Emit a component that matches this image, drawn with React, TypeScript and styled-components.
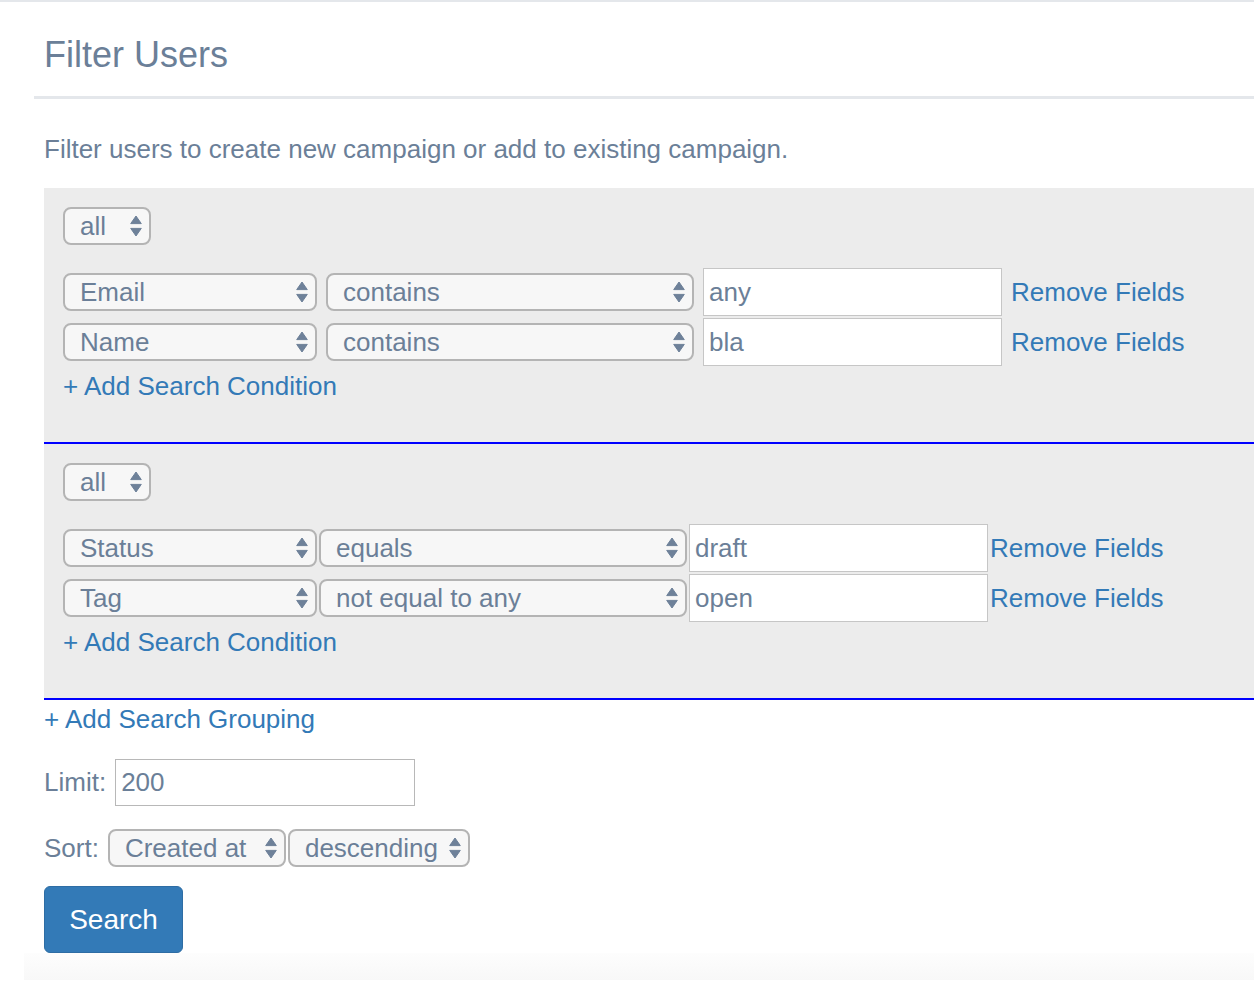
import React from "react";
import styled, { createGlobalStyle } from "styled-components";

const slate = "#6b7f98";
const link = "#337ab7";

const GlobalStyle = createGlobalStyle`
  html, body {
    margin: 0;
    padding: 0;
    background: #ffffff;
  }
  body {
    font-family: "Liberation Sans", Arial, Helvetica, sans-serif;
    color: ${slate};
  }
  * { box-sizing: border-box; }
`;

const Page = styled.div`
  border-top: 2px solid #e4e7eb;
  padding-left: 34px;
  min-height: 980px;
  display: flex;
  flex-direction: column;
`;

const Header = styled.header`
  border-bottom: 3px solid #e4e7eb;
  padding: 33px 0 21px 10px;
`;

const Title = styled.h1`
  margin: 0;
  font-size: 36px;
  line-height: 40px;
  font-weight: 400;
  color: ${slate};
`;

const Content = styled.main`
  padding-left: 10px;
  display: flex;
  flex-direction: column;
  align-items: flex-start;
`;

const Description = styled.p`
  margin: 35px 0 23px;
  font-size: 26px;
  line-height: 31px;
  color: ${slate};
`;

const Group = styled.section`
  align-self: stretch;
  background: #ececec;
  padding: 19px 19px 42px;
  border-bottom: 2px solid #0000ff;
  display: flex;
  flex-direction: column;
  align-items: flex-start;
`;

const GroupHead = styled.div`
  margin-bottom: 22px;
`;

const ConditionRow = styled.div<{ $gap: number }>`
  display: flex;
  align-items: center;
  height: 50px;
  gap: ${(p) => p.$gap}px;
`;

const SelectWrap = styled.div<{ $w: number }>`
  position: relative;
  display: inline-flex;
  width: ${(p) => p.$w}px;
  height: 38px;
  flex: none;
`;

const NativeSelect = styled.select`
  appearance: none;
  -webkit-appearance: none;
  width: 100%;
  height: 100%;
  margin: 0;
  border: 2px solid #b4b4b4;
  border-radius: 8px;
  background: #f7f7f7;
  color: ${slate};
  font-family: "Liberation Sans", Arial, Helvetica, sans-serif;
  font-size: 26px;
  padding: 0 30px 0 15px;
  outline: none;
`;

const Arrows = styled.svg`
  position: absolute;
  right: 9px;
  top: 50%;
  transform: translateY(-50%);
  width: 12px;
  height: 22px;
  pointer-events: none;
`;

const TextInput = styled.input<{ $h: number }>`
  width: 299px;
  height: ${(p) => p.$h}px;
  margin: 0;
  border: 1px solid #c6c6c6;
  background: #ffffff;
  color: ${slate};
  font-family: "Liberation Sans", Arial, Helvetica, sans-serif;
  font-size: 26px;
  padding: 0 5px;
  outline: none;
  flex: none;
`;

const LinkText = styled.a`
  color: ${link};
  font-size: 26px;
  line-height: 28px;
  text-decoration: none;
  cursor: pointer;
  white-space: nowrap;
`;

const AddCondition = styled(LinkText)`
  margin-top: 5px;
`;

const AddGrouping = styled(LinkText)`
  margin-top: 5px;
`;

const FieldRow = styled.div<{ $top: number }>`
  display: flex;
  align-items: center;
  margin-top: ${(p) => p.$top}px;
  gap: 2px;
`;

const Label = styled.label`
  font-size: 26px;
  color: ${slate};
  margin-right: 7px;
`;

const LimitInput = styled(TextInput)`
  width: 300px;
  border-color: #b8b8b8;
`;

const SearchButton = styled.button`
  margin-top: 19px;
  width: 139px;
  height: 67px;
  background: ${link};
  border: 1px solid #2e6da4;
  border-radius: 6px;
  color: #ffffff;
  font-family: "Liberation Sans", Arial, Helvetica, sans-serif;
  font-size: 28px;
  cursor: pointer;
`;

const Footer = styled.footer`
  flex: 1;
  margin-left: -10px;
  background: linear-gradient(to bottom, #fdfdfd, #f8f8f8);
`;

const Select: React.FC<{ w: number; value: string; options?: string[] }> = ({
  w,
  value,
  options,
}) => (
  <SelectWrap $w={w}>
    <NativeSelect defaultValue={value}>
      {(options ?? [value]).map((o) => (
        <option key={o} value={o}>
          {o}
        </option>
      ))}
    </NativeSelect>
    <Arrows viewBox="0 0 12 22">
      <path
        d="M6 1 L11.3 8.6 L0.7 8.6 Z M0.7 13.4 L11.3 13.4 L6 21 Z"
        fill="#6e8199"
        stroke="#6e8199"
        strokeWidth="1"
        strokeLinejoin="round"
      />
    </Arrows>
  </SelectWrap>
);

type Cond = { field: string; op: string; value: string };

const groups: { gap: number; conds: Cond[] }[] = [
  {
    gap: 9,
    conds: [
      { field: "Email", op: "contains", value: "any" },
      { field: "Name", op: "contains", value: "bla" },
    ],
  },
  {
    gap: 2,
    conds: [
      { field: "Status", op: "equals", value: "draft" },
      { field: "Tag", op: "not equal to any", value: "open" },
    ],
  },
];

const fields = ["Email", "Name", "Status", "Tag"];
const ops = ["contains", "equals", "not equal to any"];

export default function App() {
  return (
    <>
      <GlobalStyle />
      <Page>
        <Header>
          <Title>Filter Users</Title>
        </Header>
        <Content>
          <Description>
            Filter users to create new campaign or add to existing campaign.
          </Description>
          {groups.map((g, gi) => (
            <Group key={gi}>
              <GroupHead>
                <Select w={88} value="all" options={["all", "any"]} />
              </GroupHead>
              {g.conds.map((c) => (
                <ConditionRow key={c.field} $gap={g.gap}>
                  <Select w={254} value={c.field} options={fields} />
                  <Select w={368} value={c.op} options={ops} />
                  <TextInput $h={48} defaultValue={c.value} />
                  <LinkText>Remove Fields</LinkText>
                </ConditionRow>
              ))}
              <AddCondition>+ Add Search Condition</AddCondition>
            </Group>
          ))}
          <AddGrouping>+ Add Search Grouping</AddGrouping>
          <FieldRow $top={26}>
            <Label>Limit:</Label>
            <LimitInput $h={47} defaultValue="200" />
          </FieldRow>
          <FieldRow $top={23}>
            <Label>Sort:</Label>
            <Select w={178} value="Created at" options={["Created at", "Updated at"]} />
            <Select w={182} value="descending" options={["ascending", "descending"]} />
          </FieldRow>
          <SearchButton>Search</SearchButton>
        </Content>
        <Footer />
      </Page>
    </>
  );
}
